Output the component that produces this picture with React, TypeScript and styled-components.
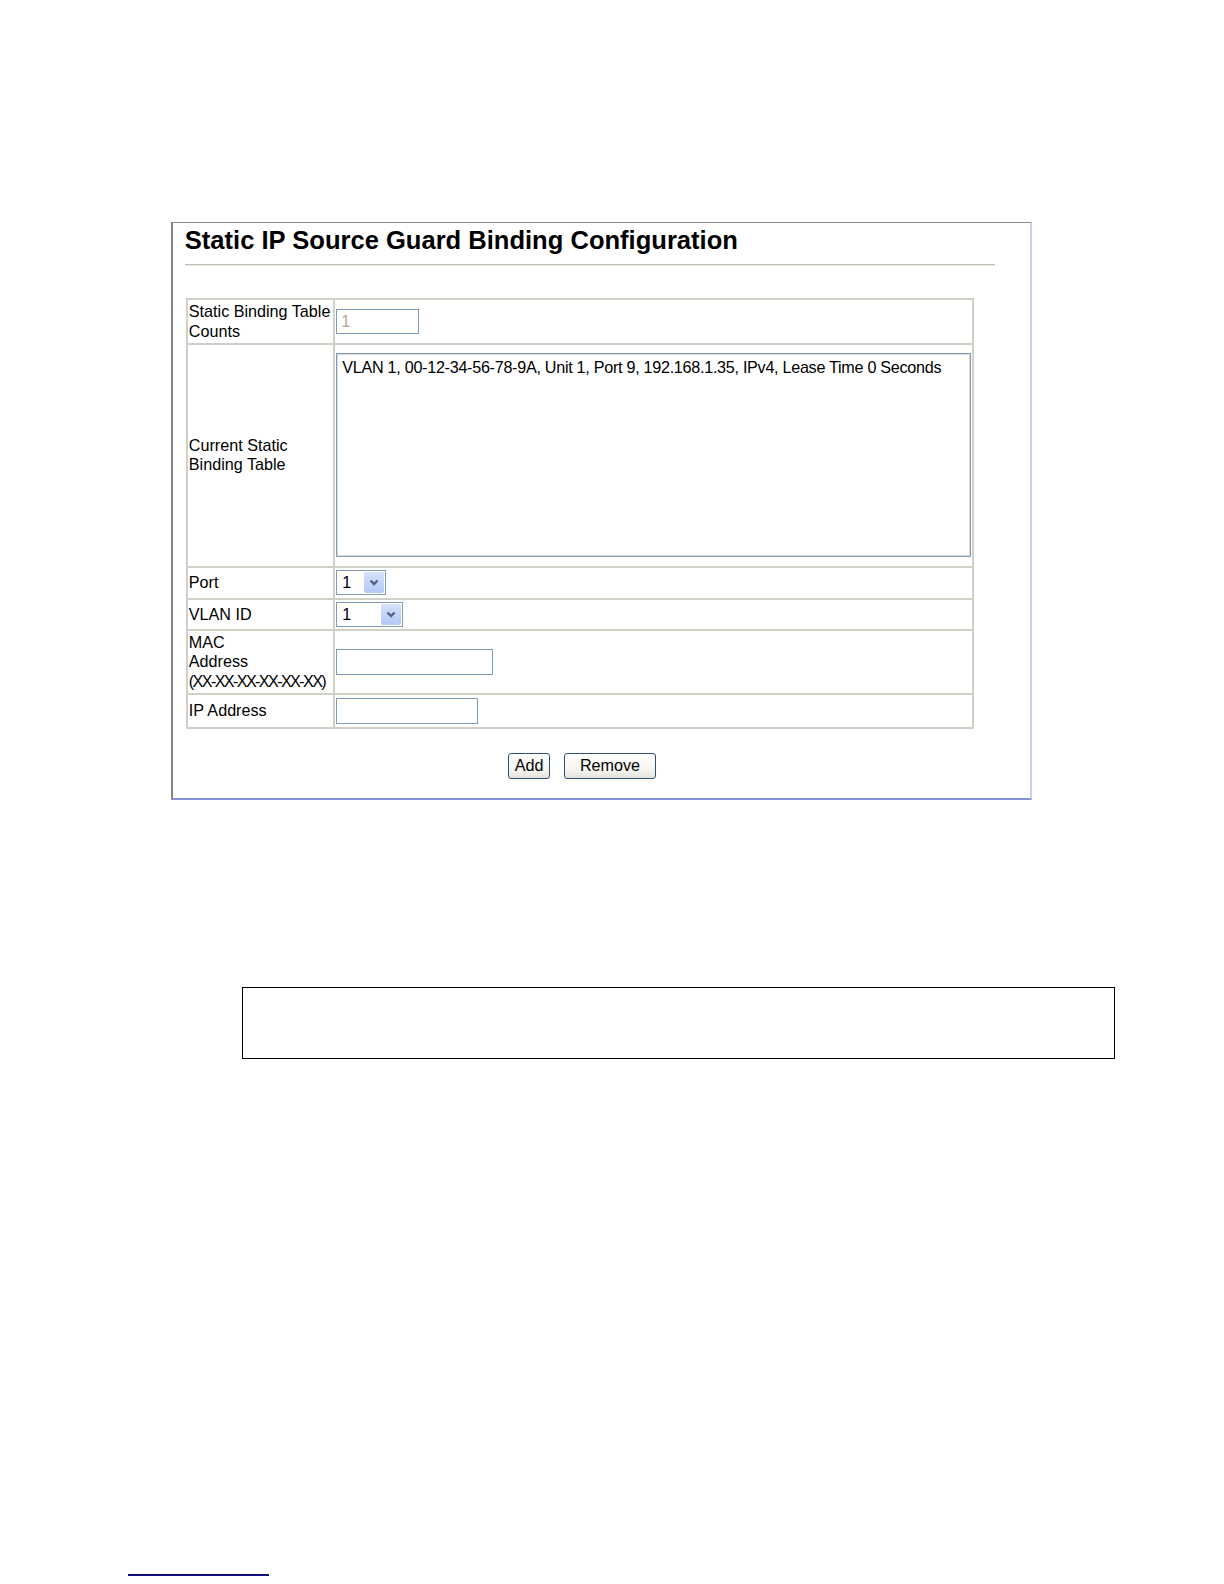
import React from "react";
import styled, { createGlobalStyle } from "styled-components";

const GlobalStyle = createGlobalStyle`
  html, body { margin: 0; padding: 0; background: #ffffff; overflow: hidden; }
  body { font-family: "Liberation Sans", Arial, sans-serif; color: #000; }
`;

const Page = styled.div`
  box-sizing: border-box;
  zoom: 1.01;
  padding-top: 220px;
  display: flex;
  flex-direction: column;
  align-items: flex-start;
`;

const Frame = styled.section`
  margin-left: 169px;
  width: 853px;
  box-sizing: border-box;
  border-top: 1px solid #8a8a8a;
  border-left: 2px solid #858585;
  border-right: 2px solid #c9cfec;
  border-bottom: 2px solid #8792d2;
  padding: 3px 0 19px 12px;
  display: flex;
  flex-direction: column;
`;

const Title = styled.h1`
  margin: 0;
  font-family: "Liberation Sans", Arial, sans-serif;
  font-size: 25.3px;
  line-height: 29px;
  font-weight: bold;
  color: #000;
`;

const Rule = styled.div`
  margin-top: 8px;
  width: 802px;
  height: 0;
  border-top: 1px solid #c0c0b2;
  border-bottom: 1px solid #e6e6dc;
`;

const Table = styled.table`
  margin-top: 32px;
  margin-left: 1px;
  width: 780px;
  border-collapse: separate;
  border-spacing: 0;
  border-top: 2px solid #d0d0c6;
  border-left: 2px solid #d0d0c6;
  table-layout: fixed;
  font-family: "Liberation Sans", Arial, sans-serif;
  font-size: 16px;
  line-height: 19px;
`;

const LabelCell = styled.td<{ $h: number }>`
  box-sizing: border-box;
  width: 146px;
  height: ${(p) => p.$h}px;
  padding: 0 0 0 1px;
  border-right: 2px solid #d0d0c6;
  border-bottom: 2px solid #d0d0c6;
  vertical-align: middle;
  color: #000;
`;

const Condensed = styled.span`
  white-space: nowrap;
  letter-spacing: -1.6px;
`;

const ValueCell = styled.td<{ $h: number }>`
  box-sizing: border-box;
  height: ${(p) => p.$h}px;
  padding: 0 1px;
  border-right: 2px solid #d0d0c6;
  border-bottom: 2px solid #d0d0c6;
  vertical-align: middle;
`;

const TextInput = styled.div<{ $w: number; $h?: number; $disabled?: boolean }>`
  box-sizing: border-box;
  width: ${(p) => p.$w}px;
  height: ${(p) => p.$h ?? 25}px;
  border: 1px solid #7f9db9;
  background: #fff;
  padding: 2px 0 0 4px;
  font-size: 16px;
  line-height: 19px;
  color: ${(p) => (p.$disabled ? "#aca899" : "#000")};
`;

const ListBox = styled.div`
  box-sizing: border-box;
  width: 628px;
  height: 202px;
  border: 1px solid #7f9db9;
  box-shadow: inset 0 0 0 1px #d8d8d8;
  background: #fff;
  padding: 4px 5px;
  font-size: 16px;
  line-height: 19px;
  letter-spacing: -0.28px;
  white-space: nowrap;
  overflow: hidden;
`;

const SelectBox = styled.div<{ $w: number }>`
  box-sizing: border-box;
  width: ${(p) => p.$w}px;
  height: 25px;
  border: 1px solid #7f9db9;
  background: #fff;
  display: flex;
  align-items: stretch;
  font-size: 16px;
`;

const SelectValue = styled.span`
  flex: 1;
  padding-left: 5px;
  display: flex;
  align-items: center;
`;

const SelectArrow = styled.span`
  width: 20px;
  margin: 1px;
  border-radius: 2px;
  background: linear-gradient(#d6e0fb, #b4c7f5);
  display: flex;
  align-items: center;
  justify-content: center;
`;

const ButtonRow = styled.div`
  margin-top: 24px;
  margin-left: 1px;
  width: 780px;
  display: flex;
  justify-content: center;
  gap: 13px;
  padding-left: 5px;
  box-sizing: border-box;
`;

const Button = styled.button<{ $w: number }>`
  box-sizing: border-box;
  width: ${(p) => p.$w}px;
  height: 25px;
  padding: 0;
  border: 1px solid #2d4f7c;
  border-radius: 3px;
  background: linear-gradient(#ffffff 0%, #f4f3ee 70%, #e3e2da 100%);
  font-family: "Liberation Sans", Arial, sans-serif;
  font-size: 16px;
  line-height: 19px;
  color: #000;
`;

const NoteBox = styled.div`
  margin-top: 185px;
  margin-left: 240px;
  width: 864px;
  height: 72px;
  box-sizing: border-box;
  border: 1px solid #000;
`;

const FooterRule = styled.div`
  margin-top: 510px;
  margin-left: 127px;
  width: 139px;
  height: 0;
  border-top: 2px solid #101080;
`;

const Chevron = () => (
  <svg width="10" height="7" viewBox="0 0 10 7">
    <path d="M1.5 1.5 L5 5 L8.5 1.5" fill="none" stroke="#4d6185" strokeWidth="2.3" />
  </svg>
);

const Select = ({ width, value }: { width: number; value: string }) => (
  <SelectBox $w={width}>
    <SelectValue>{value}</SelectValue>
    <SelectArrow>
      <Chevron />
    </SelectArrow>
  </SelectBox>
);

export default function App() {
  return (
    <>
      <GlobalStyle />
      <Page>
        <Frame>
          <Title>Static IP Source Guard Binding Configuration</Title>
          <Rule />
          <Table>
            <tbody>
              <tr>
                <LabelCell $h={45}>
                  Static Binding Table
                  <br />
                  Counts
                </LabelCell>
                <ValueCell $h={45}>
                  <TextInput $w={82} $disabled>
                    1
                  </TextInput>
                </ValueCell>
              </tr>
              <tr>
                <LabelCell $h={220}>
                  Current Static
                  <br />
                  Binding Table
                </LabelCell>
                <ValueCell $h={220}>
                  <ListBox>
                    VLAN 1, 00-12-34-56-78-9A, Unit 1, Port 9, 192.168.1.35, IPv4, Lease Time 0 Seconds
                  </ListBox>
                </ValueCell>
              </tr>
              <tr>
                <LabelCell $h={32}>Port</LabelCell>
                <ValueCell $h={32}>
                  <Select width={49} value="1" />
                </ValueCell>
              </tr>
              <tr>
                <LabelCell $h={31}>VLAN ID</LabelCell>
                <ValueCell $h={31}>
                  <Select width={66} value="1" />
                </ValueCell>
              </tr>
              <tr>
                <LabelCell $h={63}>
                  MAC
                  <br />
                  Address
                  <br />
                  <Condensed>(XX-XX-XX-XX-XX-XX)</Condensed>
                </LabelCell>
                <ValueCell $h={63}>
                  <TextInput $w={155} $h={26} />
                </ValueCell>
              </tr>
              <tr>
                <LabelCell $h={34}>IP Address</LabelCell>
                <ValueCell $h={34}>
                  <TextInput $w={140} $h={26} />
                </ValueCell>
              </tr>
            </tbody>
          </Table>
          <ButtonRow>
            <Button $w={42}>Add</Button>
            <Button $w={92}>Remove</Button>
          </ButtonRow>
        </Frame>
        <NoteBox />
        <FooterRule />
      </Page>
    </>
  );
}
